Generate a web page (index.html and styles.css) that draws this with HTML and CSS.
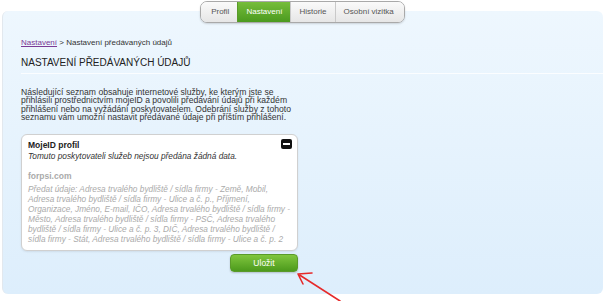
FILE: index.html
```html
<!DOCTYPE html>
<html lang="cs">
<head>
  <meta charset="UTF-8">
  <meta name="viewport" content="width=device-width, initial-scale=1.0">
  <title>Nastavení předávaných údajů</title>
  <link rel="stylesheet" href="styles.css">
</head>
<body>
  <nav class="tabs">
    <a href="#" class="tab">Profil</a>
    <a href="#" class="tab active">Nastavení</a>
    <a href="#" class="tab">Historie</a>
    <a href="#" class="tab">Osobní vizitka</a>
  </nav>

  <main class="panel">
    <p class="crumbs"><a href="#">Nastavení</a> &gt; Nastavení předávaných údajů</p>
    <h1>NASTAVENÍ PŘEDÁVANÝCH ÚDAJŮ</h1>

    <div class="content">
      <p class="intro">Následující seznam obsahuje internetové služby, ke kterým jste se přihlásili prostřednictvím mojeID a povolili předávání údajů při každém přihlášení nebo na vyžádání poskytovatelem. Odebrání služby z tohoto seznamu vám umožní nastavit předávané údaje při příštím přihlášení.</p>

      <div class="service">
        <button class="remove" title="Odebrat"></button>
        <h2>MojeID profil</h2>
        <p class="note">Tomuto poskytovateli služeb nejsou předána žádná data.</p>
        <h3>forpsi.com</h3>
        <p class="fields">Předat údaje: Adresa trvalého bydliště / sídla firmy - Země, Mobil, Adresa trvalého bydliště / sídla firmy - Ulice a č. p., Příjmení, Organizace, Jméno, E-mail, IČO, Adresa trvalého bydliště / sídla firmy - Město, Adresa trvalého bydliště / sídla firmy - PSČ, Adresa trvalého bydliště / sídla firmy - Ulice a č. p. 3, DIČ, Adresa trvalého bydliště / sídla firmy - Stát, Adresa trvalého bydliště / sídla firmy - Ulice a č. p. 2</p>
      </div>

      <div class="actions">
        <button class="save">Uložit</button>
      </div>
    </div>
  </main>

  <!-- red annotation arrow -->
  <svg class="arrow" width="60" height="40" viewBox="0 0 60 40">
    <path d="M52 39 L10 12 M10 12 L24 11 M10 12 L15 22" fill="none" stroke="#e62a2a" stroke-width="1.6" stroke-linecap="round"/>
  </svg>
</body>
</html>
```

FILE: styles.css
```css
body {
  font-family: "Liberation Sans", Arial, sans-serif;
  margin: 0;
  padding: 0;
  background: #fff;
  color: #333;
  position: relative;
  height: 301px;
  overflow: hidden;
}

.tabs {
  display: flex;
  width: fit-content;
  margin: 1px auto 0;
  border: 1px solid #a9a9a9;
  border-radius: 7px;
  overflow: hidden;
  position: relative;
  z-index: 1;
  box-shadow: 0 1px 2px rgba(0, 0, 0, 0.15);
}

.tab {
  height: 20px;
  line-height: 20px;
  padding: 0 8px;
  font-size: 8px;
  color: #555;
  text-decoration: none;
  background: linear-gradient(#fafafa, #e6e6e6);
  border-left: 1px solid #c9c9c9;
}

.tab:first-child {
  border-left: none;
  padding-left: 10px;
}

.tab:last-child {
  padding-right: 10px;
}

.tab.active {
  background: linear-gradient(#76bd3a, #4b9a1f);
  color: #fff;
  border-left-color: #5a9a2a;
}

.panel {
  margin: -12px 2px 0;
  padding: 26px 0 22px 18px;
  background: linear-gradient(#eef7fe, #ddeefc);
  border-radius: 6px;
  border-left: 1px solid #e2e8ee;
}

.crumbs {
  margin: 0;
  font-size: 8px;
  line-height: 12px;
  color: #333;
}

.crumbs a {
  color: #7b3a96;
}

h1 {
  margin: 7px 0 0;
  padding-bottom: 4px;
  font-size: 10px;
  font-weight: normal;
  line-height: 13px;
  color: #222;
  border-bottom: 1px solid #fbfdff;
}

.content {
  width: 277px;
}

.intro {
  margin: 14px 0 0;
  font-size: 8.6px;
  line-height: 8.3px;
  color: #333;
}

.service {
  position: relative;
  margin-top: 13px;
  padding: 5px 6px 6px;
  background: #fff;
  border: 1px solid #d0d0d0;
  border-radius: 6px;
  box-shadow: 0 1px 2px rgba(0, 0, 0, 0.08);
}

.service h2 {
  margin: 0;
  font-size: 8.5px;
  line-height: 11px;
  color: #222;
}

.note {
  margin: 0;
  font-size: 8.3px;
  line-height: 11px;
  font-style: italic;
  color: #333;
}

.service h3 {
  margin: 9px 0 0;
  font-size: 8.5px;
  line-height: 11px;
  color: #aaa;
}

.fields {
  margin: 2px 0 0;
  font-size: 8.3px;
  line-height: 10px;
  font-style: italic;
  color: #aaa;
}

.remove {
  position: absolute;
  top: 4px;
  right: 5px;
  width: 11px;
  height: 10px;
  padding: 0;
  border: none;
  border-radius: 2px;
  background: #111;
  cursor: pointer;
}

.remove::after {
  content: "";
  position: absolute;
  left: 2px;
  right: 2px;
  top: 4px;
  height: 2px;
  background: #fff;
}

.actions {
  display: flex;
  justify-content: flex-end;
  margin-top: 3px;
}

.save {
  width: 68px;
  height: 18px;
  padding: 0;
  font-family: inherit;
  font-size: 8.5px;
  color: #fff;
  border: 1px solid #5a9a2a;
  border-radius: 4px;
  background: linear-gradient(#80c63e, #4c9a1c);
  box-shadow: 0 1px 2px rgba(0, 0, 0, 0.2);
  cursor: pointer;
}

.arrow {
  position: absolute;
  left: 288px;
  top: 262px;
}
```
